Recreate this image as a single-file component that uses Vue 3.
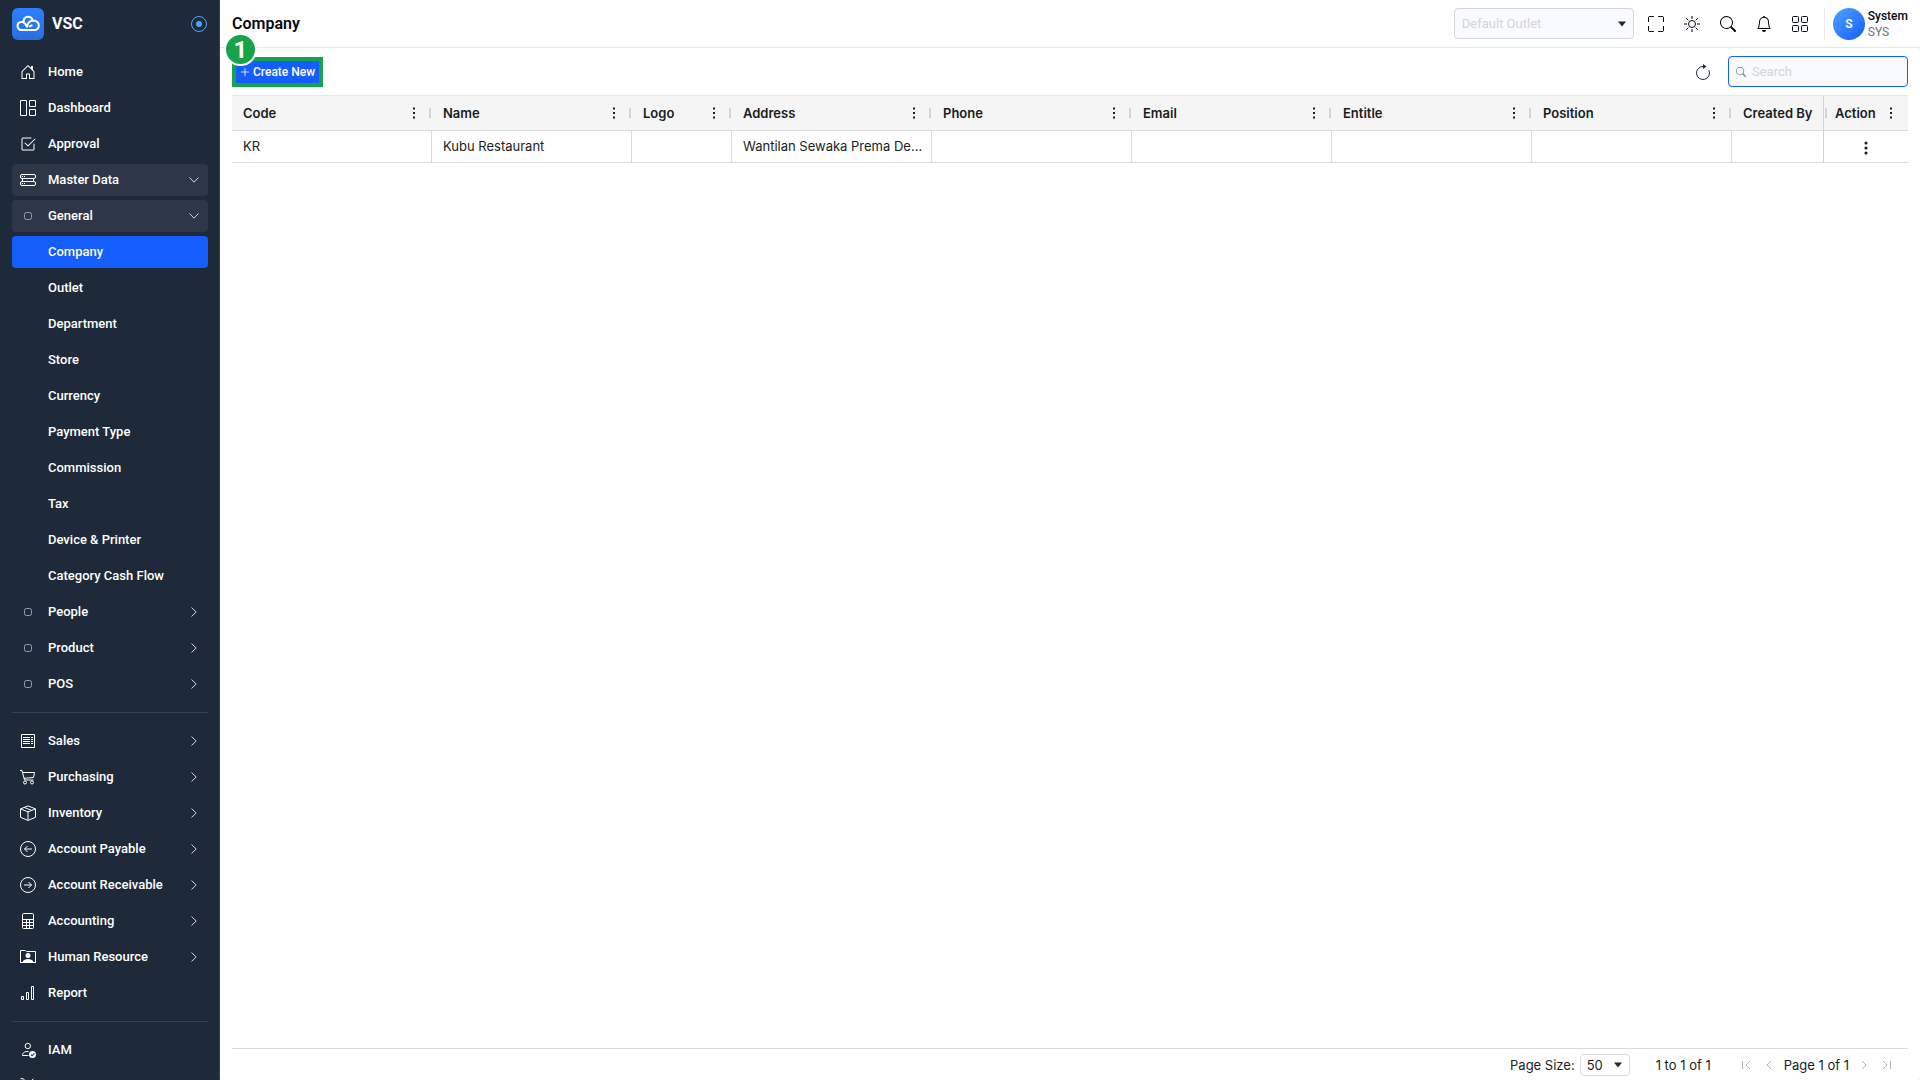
<script setup>
import { ref } from 'vue'

const search = ref('')
const pageSize = ref('50')

// Glyphs on a 16-unit grid: s = stroked path, f = filled path
const icons = {
  home: { f: 'M8.35 1.15a.5.5 0 0 0-.7 0l-6 6a.5.5 0 0 0-.15.35v7a.5.5 0 0 0 .5.5h4.5a.5.5 0 0 0 .5-.5v-4h2v4a.5.5 0 0 0 .5.5H14a.5.5 0 0 0 .5-.5v-7a.5.5 0 0 0-.15-.35L13 5.8V2.5a.5.5 0 0 0-.5-.5h-1a.5.5 0 0 0-.5.5v1.3zM2.5 14V7.7L8 2.2l5.5 5.5V14H10v-4a.5.5 0 0 0-.5-.5h-3a.5.5 0 0 0-.5.5v4z' },
  dashboard: { s: 'M.5.5h6v15h-6zM9.5.5h6v6h-6zM9.5 9.5h6v6h-6z' },
  approval: { f: 'M3 14.5A1.5 1.5 0 0 1 1.5 13V3A1.5 1.5 0 0 1 3 1.5h8a.5.5 0 0 1 0 1H3a.5.5 0 0 0-.5.5v10a.5.5 0 0 0 .5.5h10a.5.5 0 0 0 .5-.5V8a.5.5 0 0 1 1 0v5a1.5 1.5 0 0 1-1.5 1.5zM8.354 10.354l7-7a.5.5 0 0 0-.708-.708L8 9.293 5.354 6.646a.5.5 0 1 0-.708.708l3 3a.5.5 0 0 0 .708 0' },
  master: { s: 'M2 2.5h12a1.5 1.5 0 0 1 1.500 1.500v1a1.500 1.500 0 0 1-1.500 1.500H2A1.500 1.500 0 0 1 .5 5V4A1.500 1.500 0 0 1 2 2.500zM2 9.500h12a1.500 1.500 0 0 1 1.500 1.500v1a1.500 1.500 0 0 1-1.500 1.500H2A1.500 1.500 0 0 1 .5 12v-1A1.500 1.500 0 0 1 2 9.500zM2.500 6.500v3M13.500 6.500v3', f: 'M2 4h1v1H2zM4 4h1v1H4zM2 11h1v1H2zM4 11h1v1H4z' },
  dot: { s: 'M6.500 4.500h3a2 2 0 0 1 2 2v3a2 2 0 0 1-2 2h-3a2 2 0 0 1-2-2v-3a2 2 0 0 1 2-2z' },
  sales: { s: 'M1.500 1.500h13v13h-13zM3 4.500h7M3 6.500h7M3 8.500h7M3 10.500h7M11 4.500h2M11 6.500h2M11 8.500h2M11 10.500h2' },
  cart: { s: 'M0 1.500h2l2.500 9.500h9M3 3.500h11.500L13.500 8.500 4 9.300M6.500 13.500a1.500 1.500 0 1 1-3 0 1.500 1.500 0 0 1 3 0M13.500 13.500a1.500 1.500 0 1 1-3 0 1.500 1.500 0 0 1 3 0' },
  box: { s: 'M8 .9l7.500 3v8.400L8 15.400.5 12.300V3.900zM.5 3.900L8 6.900l7.500-3M8 6.900v8.500M4.200 2.400l7.500 3' },
  left: { s: 'M15.500 8a7.500 7.500 0 1 1-15 0 7.500 7.500 0 0 1 15 0M12 8H4.500M7.500 5l-3 3 3 3' },
  right: { s: 'M15.500 8a7.500 7.500 0 1 1-15 0 7.500 7.500 0 0 1 15 0M4 8h7.500M8.500 5l3 3-3 3' },
  calc: { s: 'M3.500.5h9a1 1 0 0 1 1 1v13a1 1 0 0 1-1 1h-9a1 1 0 0 1-1-1v-13a1 1 0 0 1 1-1zM2.500 6.500h11M2.500 9.500h11M2.500 12.500h11M6.500 6.500v9M9.500 6.500v9' },
  human: { s: 'M.5 13.500v-12h5l1 1h9v11', f: 'M8 4a2.500 2.500 0 1 1 0 5 2.500 2.500 0 0 1 0-5M0 13h2.500C3.500 10.800 5.500 10 8 10s4.500.8 5.500 3H16v1H0z' },
  report: { s: 'M1.500 11.500h2v3h-2zM6.500 7.500h2v7h-2zM11.500 1.500h2v13h-2z' },
  iam: { s: 'M10.500 4a2.700 2.700 0 1 1-5.400 0 2.700 2.700 0 0 1 5.400 0M8.500 13.500h-6c0-2.700 2-4.200 6-4', f: 'M12.500 9a3.500 3.500 0 1 1 0 7 3.500 3.500 0 0 1 0-7m1.500 2l-2 2-.7-.7-.7.700 1.400 1.400 2.700-2.700z' },
  tools: { s: 'M.5 .7h2.500l2 1.800v2l6 6M13.500.7l-2.500 2.500 1.500 1.500L15 2.500M11 4.500l-8 8' },
  down: { s: 'M3.500 5.500L8 10.200l4.500-4.700' },
  next: { s: 'M5.500 3.500L10.200 8l-4.700 4.500' },
  fullscreen: { s: 'M.5 6V1.500a1 1 0 0 1 1-1H6M10 .5h4.500a1 1 0 0 1 1 1V6M15.500 10v4.500a1 1 0 0 1-1 1H10M6 15.500H1.500a1 1 0 0 1-1-1V10' },
  sun: { s: 'M11.500 8a3.500 3.500 0 1 1-7 0 3.500 3.500 0 0 1 7 0M8 0v3M8 13v3M0 8h3M13 8h3M2.300 2.300l2 2M11.700 11.700l2 2M2.300 13.700l2-2M11.700 4.300l2-2' },
  search: { f: 'M11.742 10.344a6.500 6.500 0 1 0-1.397 1.398q.044.06.098.115l3.850 3.850a1 1 0 0 0 1.415-1.414l-3.850-3.850a1 1 0 0 0-.115-.1zM12 6.500a5.500 5.500 0 1 1-11 0 5.500 5.500 0 0 1 11 0' },
  bell: { f: 'M8 16a2 2 0 0 0 2-2H6a2 2 0 0 0 2 2M8 1.918l-.797.161A4 4 0 0 0 4 6c0 .628-.134 2.197-.459 3.742-.16.767-.376 1.566-.663 2.258h10.244c-.287-.692-.502-1.490-.663-2.258C12.134 8.197 12 6.628 12 6a4 4 0 0 0-3.203-3.920zM14.220 12c.223.447.481.801.78 1H1c.299-.199.557-.553.78-1C2.680 10.200 3 6.880 3 6c0-2.420 1.720-4.440 4.005-4.901a1 1 0 1 1 1.990 0A5 5 0 0 1 13 6c0 .88.32 4.200 1.220 6' },
  grid: { s: 'M1.500.5h4a1 1 0 0 1 1 1v4a1 1 0 0 1-1 1h-4a1 1 0 0 1-1-1v-4a1 1 0 0 1 1-1zM10.500.5h4a1 1 0 0 1 1 1v4a1 1 0 0 1-1 1h-4a1 1 0 0 1-1-1v-4a1 1 0 0 1 1-1zM1.500 9.500h4a1 1 0 0 1 1 1v4a1 1 0 0 1-1 1h-4a1 1 0 0 1-1-1v-4a1 1 0 0 1 1-1zM10.500 9.500h4a1 1 0 0 1 1 1v4a1 1 0 0 1-1 1h-4a1 1 0 0 1-1-1v-4a1 1 0 0 1 1-1z' },
  refresh: { s: 'M8 2.500a6.500 6.500 0 1 0 5.900 3.800', f: 'M8 0v5l3.500-2.500z' },
  plus: { s: 'M8 2.500v11M2.500 8h11' },
  target: { s: 'M15.500 8a7.500 7.500 0 1 1-15 0 7.500 7.500 0 0 1 15 0', f: 'M11 8a3 3 0 1 1-6 0 3 3 0 0 1 6 0' },
  kebab: { f: 'M7 2.500h2v2H7zM7 7h2v2H7zM7 11.500h2v2H7z' },
  kebabBold: { f: 'M9.500 3a1.500 1.500 0 1 1-3 0 1.500 1.500 0 0 1 3 0M9.500 8a1.500 1.500 0 1 1-3 0 1.500 1.500 0 0 1 3 0M9.500 13a1.500 1.500 0 1 1-3 0 1.500 1.500 0 0 1 3 0' },
  pageFirst: { s: 'M4.500 4v8M12 4L8 8l4 4' },
  pagePrev: { s: 'M10 4L6 8l4 4' },
  pageNext: { s: 'M6 4l4 4-4 4' },
  pageLast: { s: 'M4 4l4 4-4 4M11.500 4v8' },
}

const groups = [
  [
    { label: 'Home', icon: 'home' },
    { label: 'Dashboard', icon: 'dashboard' },
    { label: 'Approval', icon: 'approval' },
    { label: 'Master Data', icon: 'master', arrow: 'down', open: true },
    { label: 'General', icon: 'dot', arrow: 'down', open: true },
    { label: 'Company', active: true },
    { label: 'Outlet' },
    { label: 'Department' },
    { label: 'Store' },
    { label: 'Currency' },
    { label: 'Payment Type' },
    { label: 'Commission' },
    { label: 'Tax' },
    { label: 'Device & Printer' },
    { label: 'Category Cash Flow' },
    { label: 'People', icon: 'dot', arrow: 'next' },
    { label: 'Product', icon: 'dot', arrow: 'next' },
    { label: 'POS', icon: 'dot', arrow: 'next' },
  ],
  [
    { label: 'Sales', icon: 'sales', arrow: 'next' },
    { label: 'Purchasing', icon: 'cart', arrow: 'next' },
    { label: 'Inventory', icon: 'box', arrow: 'next' },
    { label: 'Account Payable', icon: 'left', arrow: 'next' },
    { label: 'Account Receivable', icon: 'right', arrow: 'next' },
    { label: 'Accounting', icon: 'calc', arrow: 'next' },
    { label: 'Human Resource', icon: 'human', arrow: 'next' },
    { label: 'Report', icon: 'report' },
  ],
  [
    { label: 'IAM', icon: 'iam' },
    { label: '', icon: 'tools' },
  ],
]

const actions = [
  ['fullscreen', 'Full screen'],
  ['sun', 'Theme'],
  ['search', 'Find'],
  ['bell', 'Notifications'],
  ['grid', 'Apps'],
]

const columns = [
  { label: 'Code', value: 'KR', cls: 'w-std' },
  { label: 'Name', value: 'Kubu Restaurant', cls: 'w-std' },
  { label: 'Logo', value: '', cls: 'w-logo' },
  { label: 'Address', value: 'Wantilan Sewaka Prema De...', cls: 'w-std' },
  { label: 'Phone', value: '', cls: 'w-std' },
  { label: 'Email', value: '', cls: 'w-std' },
  { label: 'Entitle', value: '', cls: 'w-std' },
  { label: 'Position', value: '', cls: 'w-std' },
  { label: 'Created By', value: '', cls: 'w-rest' },
]
</script>

<template>
  <div class="app">
    <aside class="sidebar">
      <div class="brand">
        <span class="logo">
          <svg viewBox="0 0 24 24" aria-hidden="true">
            <path class="s" d="M5.500 18a4 4 0 0 1-.8-7.900 3.600 3.600 0 0 1 2.800.3C7.200 7 9 4.700 12 4.700c2.600 0 4.300 1.500 4.800 3.900 3.800.2 6 2.200 6 5 0 2.600-1.900 4.400-4.300 4.400zM7.500 10.400c1.700.8 2.500 2 2.700 3.800M16.800 8.600c-3.300.3-5.300 2.700-6 6.900M16.500 13.200c-1.500.2-2.500.8-3.300 1.800" />
          </svg>
        </span>
        <span class="brand-name">VSC</span>
        <button class="pin" aria-label="Pin sidebar">
          <svg class="icon" viewBox="0 0 16 16"><path class="s" :d="icons.target.s" /><path class="f" :d="icons.target.f" /></svg>
        </button>
      </div>
      <nav>
        <ul v-for="(group, g) in groups" :key="g" class="group">
          <li v-for="item in group" :key="item.label">
            <a href="#" class="item" :class="{ open: item.open, active: item.active, sub: item.icon === 'dot' }" :aria-label="item.label || 'Tools'">
              <span class="slot">
                <svg v-if="item.icon" class="icon" viewBox="0 0 16 16" aria-hidden="true">
                  <path v-if="icons[item.icon].s" class="s" :d="icons[item.icon].s" />
                  <path v-if="icons[item.icon].f" class="f" :d="icons[item.icon].f" />
                </svg>
              </span>
              <span class="label">{{ item.label }}</span>
              <svg v-if="item.arrow" class="icon arrow" viewBox="0 0 16 16" aria-hidden="true"><path class="s" :d="icons[item.arrow].s" /></svg>
            </a>
          </li>
        </ul>
      </nav>
    </aside>

    <main class="main">
      <header class="topbar">
        <h1>Company</h1>
        <div class="outlet">
          <select disabled aria-label="Outlet"><option>Default Outlet</option></select>
          <span class="caret"></span>
        </div>
        <div class="actions">
          <button v-for="[name, title] in actions" :key="name" :aria-label="title">
            <svg class="icon" viewBox="0 0 16 16">
              <path v-if="icons[name].s" class="s" :d="icons[name].s" />
              <path v-if="icons[name].f" class="f" :d="icons[name].f" />
            </svg>
          </button>
        </div>
        <div class="user">
          <span class="avatar">S</span>
          <div class="who"><strong>System</strong><span>SYS</span></div>
        </div>
      </header>

      <section class="panel">
        <div class="toolbar">
          <div class="callout">
            <button class="create">
              <svg class="icon" viewBox="0 0 16 16" aria-hidden="true"><path class="s" :d="icons.plus.s" /></svg>
              <span>Create New</span>
            </button>
            <span class="badge">1</span>
          </div>
          <button class="refresh" aria-label="Refresh">
            <svg class="icon" viewBox="0 0 16 16"><path class="s" :d="icons.refresh.s" /><path class="f" :d="icons.refresh.f" /></svg>
          </button>
          <label class="search">
            <svg class="icon" viewBox="0 0 16 16" aria-hidden="true"><path class="f" :d="icons.search.f" /></svg>
            <input v-model="search" type="text" placeholder="Search" aria-label="Search" />
          </label>
        </div>

        <div class="grid-wrap">
          <table>
            <colgroup>
              <col v-for="c in columns" :key="c.label" :class="c.cls" />
              <col class="w-action" />
            </colgroup>
            <thead>
              <tr>
                <th v-for="c in columns" :key="c.label" scope="col">
                  <div class="head">
                    <span>{{ c.label }}</span>
                    <template v-if="c.cls !== 'w-rest'">
                      <svg class="icon" viewBox="0 0 16 16" aria-hidden="true"><path class="f" :d="icons.kebab.f" /></svg>
                      <i class="sep"></i>
                    </template>
                  </div>
                </th>
                <th scope="col" class="pinned">
                  <div class="head">
                    <i class="sep"></i>
                    <span>Action</span>
                    <svg class="icon" viewBox="0 0 16 16" aria-hidden="true"><path class="f" :d="icons.kebab.f" /></svg>
                  </div>
                </th>
              </tr>
            </thead>
            <tbody>
              <tr>
                <td v-for="c in columns" :key="c.label">{{ c.value }}</td>
                <td class="pinned">
                  <button class="more" aria-label="Row actions">
                    <svg class="icon" viewBox="0 0 16 16"><path class="f" :d="icons.kebabBold.f" /></svg>
                  </button>
                </td>
              </tr>
            </tbody>
          </table>
        </div>

        <footer class="pager">
          <label for="page-size">Page Size:</label>
          <div class="size">
            <select id="page-size" v-model="pageSize"><option>50</option><option>100</option></select>
            <span class="caret"></span>
          </div>
          <span class="range">1 to 1 of 1</span>
          <div class="pages">
            <button disabled aria-label="First page"><svg class="icon" viewBox="0 0 16 16"><path class="s" :d="icons.pageFirst.s" /></svg></button>
            <button disabled aria-label="Previous page"><svg class="icon" viewBox="0 0 16 16"><path class="s" :d="icons.pagePrev.s" /></svg></button>
            <span>Page 1 of 1</span>
            <button disabled aria-label="Next page"><svg class="icon" viewBox="0 0 16 16"><path class="s" :d="icons.pageNext.s" /></svg></button>
            <button disabled aria-label="Last page"><svg class="icon" viewBox="0 0 16 16"><path class="s" :d="icons.pageLast.s" /></svg></button>
          </div>
        </footer>
      </section>
    </main>
  </div>
</template>

<style>
body {
  margin: 0;
}
</style>

<style scoped>
* {
  box-sizing: border-box;
}
.app {
  display: flex;
  height: 100vh;
  overflow: hidden;
  font: 400 13px/16px Roboto, "Liberation Sans", sans-serif;
  color: #030712;
  background: #f3f4f6;
}
button {
  display: flex;
  align-items: center;
  justify-content: center;
  padding: 0;
  border: 0;
  background: none;
  color: inherit;
  font: inherit;
}
.icon {
  display: block;
  flex: none;
  width: 16px;
  height: 16px;
}
.s {
  fill: none;
  stroke: currentColor;
}
.f {
  fill: currentColor;
}

/* Sidebar */
.sidebar {
  flex: none;
  width: 220px;
  padding: 0 11px 0 12px;
  overflow: hidden;
  border-right: 1px solid #364153;
  background: #1e2939;
  color: #fff;
}
.brand {
  display: flex;
  align-items: center;
  gap: 8px;
  height: 48px;
  margin-bottom: 8px;
}
.logo {
  display: grid;
  place-items: center;
  width: 32px;
  height: 32px;
  border-radius: 6px;
  background: linear-gradient(#2b7fff, #2a6fdf);
}
.logo svg {
  width: 24px;
  height: 24px;
}
.logo .s {
  stroke-width: 2;
}
.brand-name {
  flex: 1;
  font-size: 16px;
  font-weight: 700;
}
.pin {
  margin-right: 1px;
  color: #51a2ff;
}
.group {
  display: flex;
  flex-direction: column;
  gap: 4px;
  margin: 0;
  padding: 0;
  list-style: none;
}
.group + .group {
  margin-top: 12px;
  padding-top: 12px;
  border-top: 1px solid #364153;
}
.item {
  display: flex;
  align-items: center;
  height: 32px;
  padding: 0 6px 0 8px;
  border-radius: 4px;
  color: inherit;
  font-weight: 500;
  text-decoration: none;
}
.item.open {
  background: #2d3748;
}
.item.active {
  background: #155dfc;
}
.slot {
  flex: none;
  width: 28px;
}
.sub .slot {
  color: #99a1af;
}
.label {
  flex: 1;
}
.arrow {
  color: #d1d5dc;
}

/* Top bar */
.main {
  flex: 1;
  display: flex;
  flex-direction: column;
  min-width: 0;
}
.topbar {
  display: flex;
  align-items: center;
  height: 48px;
  padding: 0 12px;
  border-bottom: 1px solid #e5e7eb;
  background: #fff;
}
h1 {
  flex: 1;
  margin: 0;
  font-size: 16px;
  font-weight: 600;
}
.outlet,
.size {
  position: relative;
}
select {
  display: block;
  appearance: none;
  width: 100%;
  font: inherit;
  color: inherit;
  opacity: 1;
}
.outlet select {
  width: 180px;
  height: 31px;
  padding: 0 7px;
  border: 1px solid #d1d5dc;
  border-radius: 4px;
  background: #f9fafb;
  color: #d1d5dc;
}
.caret {
  position: absolute;
  top: 50%;
  right: 8px;
  border: 4px solid transparent;
  border-top: 5px solid #1e2939;
  border-bottom: 0;
  transform: translateY(-50%);
  pointer-events: none;
}
.actions {
  display: flex;
  margin: 0 6px 0 4px;
}
.actions button {
  width: 36px;
  height: 32px;
}
.user {
  display: flex;
  align-items: center;
  gap: 3px;
  padding-left: 8px;
  border-left: 1px solid #e5e7eb;
}
.avatar {
  width: 32px;
  border-radius: 50%;
  background: linear-gradient(135deg, #51a2ff, #155dfc);
  color: #fff;
  font-size: 12px;
  font-weight: 600;
  line-height: 32px;
  text-align: center;
}
.who {
  display: flex;
  flex-direction: column;
  font-size: 12px;
}
.who strong {
  font-weight: 500;
}
.who span {
  color: #6a7282;
}

/* Toolbar */
.panel {
  flex: 1;
  display: flex;
  flex-direction: column;
  min-height: 0;
  padding: 0 12px;
  border-radius: 4px;
  background: #fff;
}
.toolbar {
  display: flex;
  align-items: center;
  height: 47px;
}
.callout {
  position: relative;
  margin-right: auto;
  border: 4px solid #16a34a;
}
.create {
  gap: 2px;
  height: 22px;
  padding: 0 4px 0 3px;
  background: #155dfc;
  color: #fff;
  font-size: 12px;
  font-weight: 500;
}
.create .icon {
  width: 12px;
  height: 12px;
}
.badge {
  position: absolute;
  top: -28px;
  left: -12px;
  width: 33px;
  height: 33px;
  border: 2px solid #fff;
  border-radius: 50%;
  background: #16a34a;
  color: #fff;
  font-size: 24px;
  font-weight: 700;
  line-height: 30px;
  text-align: center;
}
.refresh {
  width: 36px;
  height: 32px;
  margin-right: 7px;
  color: #1e2939;
}
.search {
  display: flex;
  align-items: center;
  gap: 6px;
  width: 180px;
  height: 31px;
  padding: 0 7px;
  border: 1px solid #155dfc;
  border-radius: 4px;
  background: #f9fafb;
}
.search .icon {
  width: 10px;
  height: 10px;
  color: #6a7282;
}
.search input {
  flex: 1;
  min-width: 0;
  padding: 0;
  border: 0;
  outline: 0;
  background: none;
  font: inherit;
}
.search input::placeholder {
  color: #d1d5dc;
}

/* Data grid */
.grid-wrap {
  flex: 1;
  min-height: 0;
}
table {
  width: 100%;
  border-collapse: separate;
  border-spacing: 0;
  table-layout: fixed;
  color: #181d1f;
  font-family: Inter, sans-serif;
}
.w-std {
  width: 200px;
}
.w-logo {
  width: 100px;
}
.w-action {
  width: 85px;
}
th {
  height: 36px;
  padding: 0;
  border: solid #dadbdc;
  border-width: 1px 0;
  border-top-color: #e5e7eb;
  background: #f5f5f5;
  font-weight: 600;
  text-align: left;
}
.head {
  display: flex;
  align-items: center;
  padding-left: 11px;
}
.head span {
  flex: 1;
  line-height: 18px;
  white-space: nowrap;
}
.head .icon {
  margin-right: 7px;
}
.sep {
  width: 2px;
  height: 10px;
  margin-right: 1px;
  background: #d3d3d4;
}
th.pinned .head {
  padding-left: 1px;
}
th.pinned .sep {
  margin-right: 8px;
}
th.pinned .icon {
  margin-right: 9px;
}
td {
  height: 32px;
  padding: 0 4px 1px 11px;
  overflow: hidden;
  border: solid #dadbdc;
  border-width: 0 1px 1px 0;
  text-overflow: ellipsis;
  white-space: nowrap;
}
td:nth-last-child(2) {
  border-right-width: 0;
}
.pinned {
  border-left: 1px solid #d3d3d4;
}
td.pinned {
  padding: 0;
  border-right: 0;
}
.more {
  width: 100%;
  height: 31px;
  padding-top: 3px;
}

/* Pager */
.pager {
  display: flex;
  align-items: center;
  justify-content: flex-end;
  height: 32px;
  border-top: 1px solid #dadbdc;
  color: #181d1f;
  font-family: Inter, sans-serif;
}
.size {
  width: 50px;
  margin: 0 26px 0 5px;
}
.size select {
  height: 22px;
  padding: 0 6px;
  border: 1px solid #dadbdc;
  border-radius: 4px;
  background: #fff;
}
.pages {
  display: flex;
  align-items: center;
  gap: 7px;
  margin: 0 13px 0 27px;
}
.pages button {
  color: #b5b7b8;
}
</style>
